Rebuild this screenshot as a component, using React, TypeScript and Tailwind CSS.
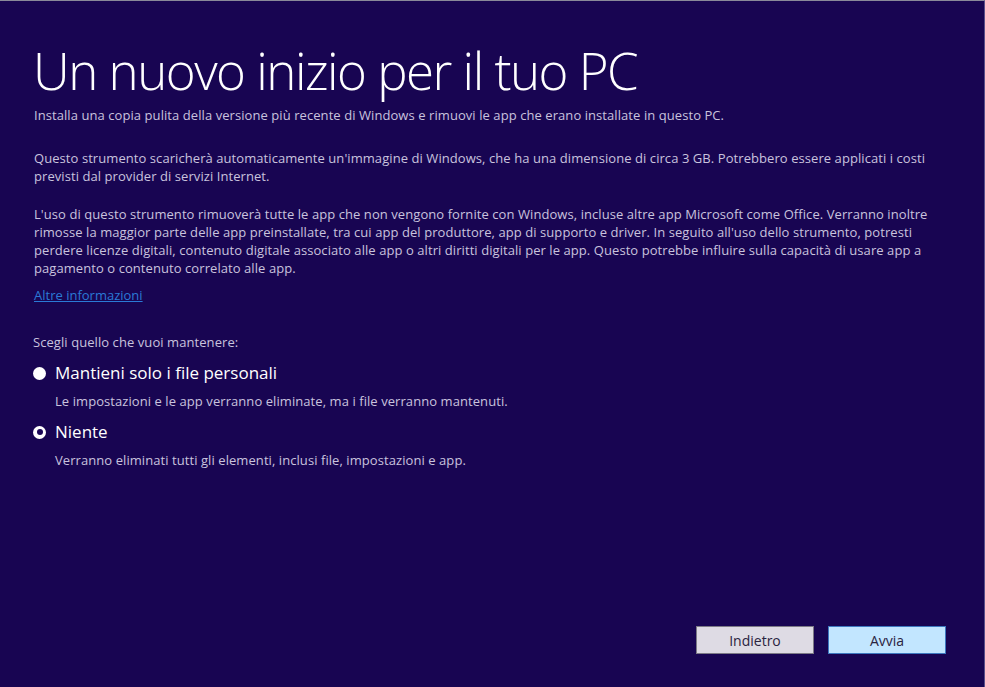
import React from "react";

const body = "text-[13px] leading-[18px] tracking-[0.07px] text-[#c9c3de]";

function Radio({ checked }: { checked: boolean }) {
  return checked ? (
    <span className="flex h-[13px] w-[13px] shrink-0 items-center justify-center rounded-full bg-white">
      <span className="h-[6px] w-[6px] rounded-full bg-[#1a0656]" />
    </span>
  ) : (
    <span className="h-[13px] w-[13px] shrink-0 rounded-full bg-white" />
  );
}

export default function App() {
  return (
    <div
      className="flex h-[687px] w-[985px] flex-col border-t border-r border-t-[#8a8a9a] border-r-[#5a4f8a] bg-[#180552] pl-[33px]"
      style={{ fontFamily: '"Segoe UI", "Open Sans", sans-serif' }}
    >
      <h1 className="mt-[35px] text-[51px] font-light leading-[68px] tracking-[-1.5px] text-white">
        Un nuovo inizio per il tuo PC
      </h1>

      <p className={`${body} mt-[2px] pl-[1px]`}>
        Installa una copia pulita della versione più recente di Windows e rimuovi le app che erano installate in questo PC.
      </p>

      <p className={`${body} mt-[25px] pl-[1px]`}>
        Questo strumento scaricherà automaticamente un'immagine di Windows, che ha una dimensione di circa 3 GB. Potrebbero essere applicati i costi
        <br />
        previsti dal provider di servizi Internet.
      </p>

      <p className={`${body} mt-[20px] pl-[1px]`}>
        L'uso di questo strumento rimuoverà tutte le app che non vengono fornite con Windows, incluse altre app Microsoft come Office. Verranno inoltre
        <br />
        rimosse la maggior parte delle app preinstallate, tra cui app del produttore, app di supporto e driver. In seguito all'uso dello strumento, potresti
        <br />
        perdere licenze digitali, contenuto digitale associato alle app o altri diritti digitali per le app. Questo potrebbe influire sulla capacità di usare app a
        <br />
        pagamento o contenuto correlato alle app.
      </p>

      <a className="mt-[9px] w-fit pl-[1px] text-[13px] leading-[18px] text-[#2a7ad6] underline">
        Altre informazioni
      </a>

      <p className={`${body} mt-[29px]`}>Scegli quello che vuoi mantenere:</p>

      <div className="mt-[10px] flex flex-col">
        <label className="flex items-center gap-[9px]">
          <Radio checked={false} />
          <span className="text-[17px] leading-[24px] text-white">Mantieni solo i file personali</span>
        </label>
        <p className={`${body} mt-[7px] pl-[22px]`}>
          Le impostazioni e le app verranno eliminate, ma i file verranno mantenuti.
        </p>

        <label className="mt-[10px] flex items-center gap-[9px]">
          <Radio checked={true} />
          <span className="text-[17px] leading-[24px] text-white">Niente</span>
        </label>
        <p className={`${body} mt-[7px] pl-[22px]`}>
          Verranno eliminati tutti gli elementi, inclusi file, impostazioni e app.
        </p>
      </div>

      <div className="mt-auto mb-[33px] mr-[38px] flex justify-end gap-[14px]">
        <button className="h-[28px] w-[118px] border border-[#7c7a86] bg-[#dedbe4] text-[14px] text-[#2a2340]">
          Indietro
        </button>
        <button className="h-[28px] w-[118px] border border-[#3d79c0] bg-[#c2e6ff] text-[14px] text-[#2a2340]">
          Avvia
        </button>
      </div>
    </div>
  );
}
